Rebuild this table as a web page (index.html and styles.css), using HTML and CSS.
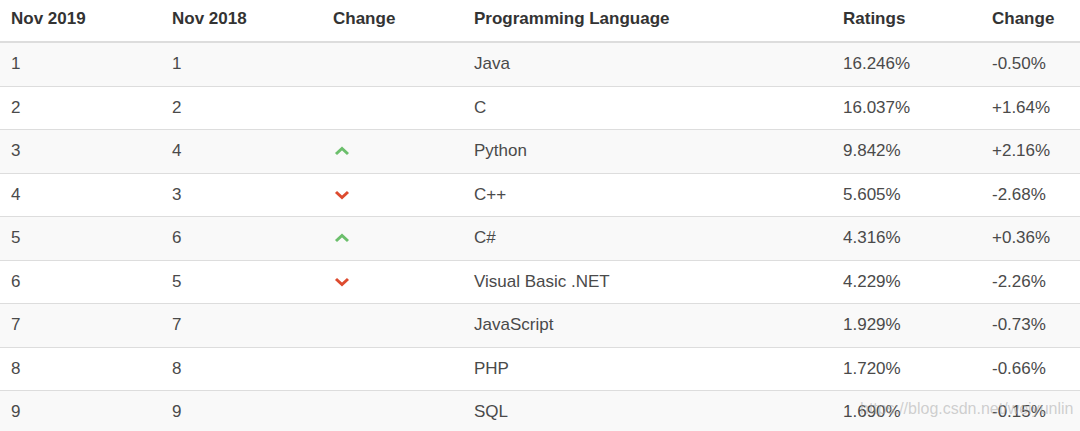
FILE: index.html
```html
<!DOCTYPE html>
<html>
<head>
<meta charset="utf-8">
<link rel="stylesheet" href="styles.css">
</head>
<body>
<div class="wrap">
<table class="rank">
  <colgroup>
    <col class="c1"><col class="c2"><col class="c3"><col class="c4"><col class="c5"><col class="c6">
  </colgroup>
  <thead>
    <tr><th>Nov 2019</th><th>Nov 2018</th><th>Change</th><th>Programming Language</th><th>Ratings</th><th>Change</th></tr>
  </thead>
  <tbody>
    <tr><td>1</td><td>1</td><td></td><td>Java</td><td>16.246%</td><td>-0.50%</td></tr>
    <tr><td>2</td><td>2</td><td></td><td>C</td><td>16.037%</td><td>+1.64%</td></tr>
    <tr><td>3</td><td>4</td><td><svg class="arrow up" width="16" height="10" viewBox="0 0 16 10"><polyline points="2,8 8,2.5 14,8"/></svg></td><td>Python</td><td>9.842%</td><td>+2.16%</td></tr>
    <tr><td>4</td><td>3</td><td><svg class="arrow down" width="16" height="10" viewBox="0 0 16 10"><polyline points="2,2 8,7.5 14,2"/></svg></td><td>C++</td><td>5.605%</td><td>-2.68%</td></tr>
    <tr><td>5</td><td>6</td><td><svg class="arrow up" width="16" height="10" viewBox="0 0 16 10"><polyline points="2,8 8,2.5 14,8"/></svg></td><td>C#</td><td>4.316%</td><td>+0.36%</td></tr>
    <tr><td>6</td><td>5</td><td><svg class="arrow down" width="16" height="10" viewBox="0 0 16 10"><polyline points="2,2 8,7.5 14,2"/></svg></td><td>Visual Basic .NET</td><td>4.229%</td><td>-2.26%</td></tr>
    <tr><td>7</td><td>7</td><td></td><td>JavaScript</td><td>1.929%</td><td>-0.73%</td></tr>
    <tr><td>8</td><td>8</td><td></td><td>PHP</td><td>1.720%</td><td>-0.66%</td></tr>
    <tr><td>9</td><td>9</td><td></td><td>SQL</td><td>1.690%</td><td>-0.15%</td></tr>
  </tbody>
</table>
<div class="watermark">https://blog.csdn.net/weiyunlin</div>
</div>
</body>
</html>
```
FILE: styles.css
```css
html, body {
  margin: 0;
  padding: 0;
  background: #fff;
}
body {
  font-family: "Liberation Sans", Arial, sans-serif;
  font-size: 17px;
  color: #4a4a4a;
}
.wrap {
  position: relative;
  width: 1080px;
  height: 431px;
  overflow: hidden;
}
.rank {
  width: 1080px;
  border-collapse: collapse;
  table-layout: fixed;
}
.c1 { width: 161px; }
.c2 { width: 161px; }
.c3 { width: 141px; }
.c4 { width: 369px; }
.c5 { width: 149px; }
.c6 { width: 99px; }
.rank th {
  text-align: left;
  font-weight: bold;
  color: #333;
  padding: 0 0 4px 11px;
  height: 37px;
  border-bottom: 2px solid #dddddd;
  vertical-align: middle;
}
.rank td {
  padding: 0 0 0 11px;
  height: 42.5px;
  border-bottom: 1px solid #dddddd;
  vertical-align: middle;
  white-space: nowrap;
}
.rank tbody tr:nth-child(odd) td {
  background: #f9f9f9;
}
.arrow {
  display: block;
  margin-left: 1px;
}
.arrow polyline {
  fill: none;
  stroke-width: 3;
  stroke-linecap: butt;
  stroke-linejoin: miter;
}
.arrow.up polyline { stroke: #6cbf6c; }
.arrow.down polyline { stroke: #dd4b2f; }
.watermark {
  position: absolute;
  left: 860px;
  top: 400px;
  font-size: 16px;
  color: rgba(170, 170, 170, 0.55);
  white-space: nowrap;
}
```
